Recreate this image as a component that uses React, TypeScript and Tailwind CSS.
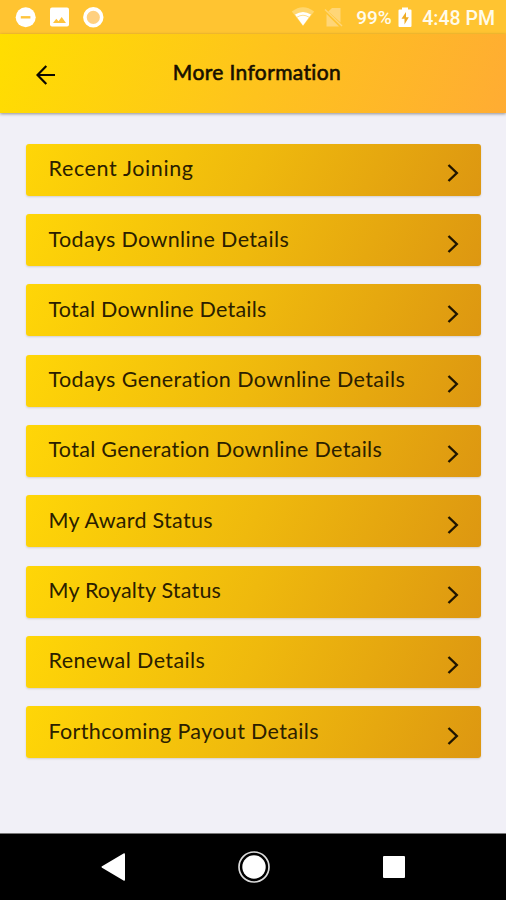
const items = [
  { label: 'Recent Joining', tracking: 'tracking-[0.63px]' },
  { label: 'Todays Downline Details', tracking: 'tracking-[0.37px]' },
  { label: 'Total Downline Details', tracking: 'tracking-[0.25px]' },
  { label: 'Todays Generation Downline Details', tracking: 'tracking-[0.4px]' },
  { label: 'Total Generation Downline Details', tracking: 'tracking-[0.3px]' },
  { label: 'My Award Status', tracking: 'tracking-[0.3px]' },
  { label: 'My Royalty Status', tracking: 'tracking-[0.2px]' },
  { label: 'Renewal Details', tracking: 'tracking-[0.4px]' },
  { label: 'Forthcoming Payout Details', tracking: 'tracking-[0.35px]' },
];

function StatusBar() {
  return (
    <div className="flex h-[34px] shrink-0 items-center justify-between bg-[#ffc431] pl-[15px] pr-[11px] font-['Roboto',sans-serif] text-[19px] font-medium text-[#fffbea]">
      <div className="flex items-center gap-[13px]">
        <svg width="21" height="21" viewBox="0 0 21 21">
          <circle cx="10.7" cy="10.3" r="10" fill="#fff" />
          <path d="M5.8 10.3h9.6" stroke="#ffc43c" strokeWidth="2.4" />
        </svg>
        <svg width="21" height="20" viewBox="0 0 21 20">
          <rect x="1" y="0.5" width="19" height="19" rx="2" fill="#fff" />
          <path d="M4 16l3.3-4.3 2.2 2.6 3.2-4.3 4.3 6z" fill="#ffc43c" />
        </svg>
        <svg width="21" height="21" viewBox="0 0 21 21">
          <circle cx="10.3" cy="10.3" r="8.4" fill="#ffd080" stroke="#fff" strokeWidth="3.6" />
        </svg>
      </div>
      <div className="flex items-center">
        <svg width="24" height="20" viewBox="0 0 24 20" className="mr-[9px]">
          <path d="M0.8 4.5Q12-4.2 23.2 4.5L12 19z" fill="#ffd66e" />
          <path d="M4 7.6Q12 2.6 20 7.6L12 18.5z" fill="#fff" />
          <path d="M6 10.2Q12 6.3 18 10.2" fill="none" stroke="#ffdf90" strokeWidth="1" />
        </svg>
        <svg width="20" height="21" viewBox="0 0 20 21" className="mr-[12px]">
          <path d="M8 1h8.5v14.5L4.3 4.6zM2.5 7v12.5H15z" fill="#ffd677" />
          <path d="M1 2.5L18 19" stroke="#ffd677" strokeWidth="1.4" />
        </svg>
        <span className="mt-[2px] mr-[5px] w-[37px] whitespace-nowrap">99%</span>
        <svg width="14" height="21" viewBox="0 0 14 20" className="mr-[10px]">
          <path d="M4 0h6v2h2.5q1 0 1 1v15.5q0 1-1 1h-11q-1 0-1-1V3q0-1 1-1H4z" fill="#fff" />
          <path d="M8 4.5L3.5 11.3h3V17l4.3-7.2H8z" fill="#efac25" />
        </svg>
        <span className="mt-[3px] text-[19.5px] whitespace-nowrap">4:48 PM</span>
      </div>
    </div>
  );
}

function Header() {
  return (
    <header className="grid h-[79px] shrink-0 grid-cols-[100px_1fr_100px] items-center bg-linear-[112deg,#ffde00_0%,#fec41c_50%,#ffac33_100%] shadow-[0_1px_3px_rgba(0,0,0,0.4)]">
      <svg width="20" height="20" viewBox="0 0 20 20" className="mt-[3px] ml-[36px]" fill="none" stroke="#0c0900" strokeWidth="2.2">
        <path d="M19 10H1.8M10.3 1L1.5 10l8.8 9" />
      </svg>
      <h1 className="mb-[4px] pl-[8px] text-center text-[21px] leading-6 font-normal tracking-[0.37px] whitespace-nowrap text-[#171000] [-webkit-text-stroke:0.6px_#171000]">More Information</h1>
    </header>
  );
}

export default function App() {
  return (
    <div className="flex h-[900px] w-[506px] flex-col overflow-hidden bg-[#f1f0f7] font-['Lato',sans-serif]">
      <StatusBar />
      <Header />
      <main className="flex flex-1 flex-col gap-[18.3px] pt-[30.8px] pr-[25px] pl-[26px]">
        {items.map((item) => (
          <button
            key={item.label}
            className="flex h-[52px] shrink-0 items-center justify-between rounded-[3px] bg-linear-[115deg,#ffd607_0%,#efb90d_50%,#dd9711_100%] pr-[22px] pl-[22.5px] text-left shadow-[0_1px_2px_rgba(90,80,60,0.2)]"
          >
            <span className={`mb-[3px] text-[21.5px] leading-6 whitespace-nowrap text-[#2b2000] ${item.tracking}`}>{item.label}</span>
            <svg width="12" height="18" viewBox="0 0 12 18" className="mt-[7px]" fill="none" stroke="#201500" strokeWidth="2.4">
              <path d="M1.5 1L9.8 9l-8.3 8" />
            </svg>
          </button>
        ))}
      </main>
      <nav className="grid h-[67px] shrink-0 grid-cols-[137px_32px_113px_22px] items-center border-t border-[#777] bg-black pl-[100.5px]">
        <svg width="25" height="28" viewBox="0 0 25 28" fill="#fff">
          <path d="M1 13.3L22.5.5q1.5-.7 1.5 1v25q0 1.7-1.5 1L1 14.7q-1-.7 0-1.4z" />
        </svg>
        <svg width="32" height="32" viewBox="0 0 32 32">
          <circle cx="16" cy="16" r="15" fill="none" stroke="#ddd" strokeWidth="1.7" />
          <circle cx="16" cy="16" r="11.7" fill="#fff" />
        </svg>
        <svg width="22" height="22" viewBox="0 0 22 22" className="col-start-4">
          <rect width="22" height="22" rx="1" fill="#fff" />
        </svg>
      </nav>
    </div>
  );
}
